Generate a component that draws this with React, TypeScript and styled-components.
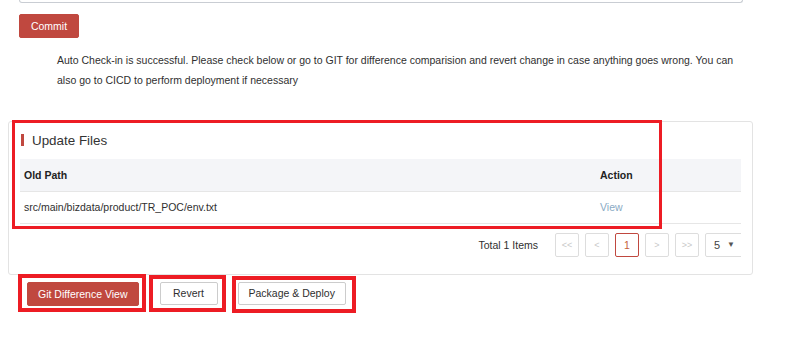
import React from "react";
import styled, { createGlobalStyle } from "styled-components";

const GlobalStyle = createGlobalStyle`
  html, body { margin: 0; padding: 0; background: #ffffff; }
  body {
    font-family: "Liberation Sans", Arial, sans-serif;
    font-size: 10.5px;
    color: #2f2f2f;
  }
  * { box-sizing: border-box; }
`;

const Page = styled.div`
  position: relative;
  width: 786px;
  height: 364px;
  overflow: hidden;
`;

const InputTail = styled.div`
  margin-left: 19px;
  width: 724px;
  height: 3px;
  border: 1px solid #c9cdd3;
  border-top: none;
  border-radius: 0 0 3px 3px;
`;

const Button = styled.button<{ $primary?: boolean }>`
  display: inline-flex;
  align-items: center;
  justify-content: center;
  height: ${(p) => (p.$primary ? "24px" : "23px")};
  min-width: 58px;
  padding: 0 10px;
  font-family: "Liberation Sans", Arial, sans-serif;
  font-size: 10.5px;
  border-radius: 2px;
  cursor: pointer;
  background: ${(p) => (p.$primary ? "#c0483f" : "#ffffff")};
  color: ${(p) => (p.$primary ? "#ffffff" : "#2f2f2f")};
  border: 1px solid ${(p) => (p.$primary ? "#c0483f" : "#cccccc")};
`;

const CommitButton = styled(Button)`
  margin: 11px 0 0 19px;
  width: 60px;
`;

const Message = styled.p`
  margin: 12px 0 0 57px;
  width: 690px;
  line-height: 20px;
`;

const Card = styled.section`
  margin: 31px 0 0 8px;
  width: 745px;
  border: 1px solid #e3e3e3;
  border-radius: 3px;
  padding: 8px 11px 17px 11px;
`;

const Title = styled.h3`
  display: flex;
  align-items: center;
  gap: 8px;
  height: 20px;
  margin: 0 0 9px 1px;
  font-size: 13.4px;
  font-weight: normal;
  color: #333333;
  &::before {
    content: "";
    width: 3px;
    height: 12px;
    background: #c0483f;
  }
`;

const Table = styled.table`
  width: 100%;
  border-collapse: collapse;
`;

const HeadCell = styled.th<{ $w?: number }>`
  height: 32px;
  padding: 0 4px;
  text-align: left;
  font-weight: bold;
  color: #222222;
  background: #f4f5f8;
  border-bottom: 1px solid #e6e6e6;
  width: ${(p) => (p.$w ? `${p.$w}px` : "auto")};
`;

const Cell = styled.td`
  height: 32px;
  padding: 0 4px;
  border-bottom: 1px solid #e6e6e6;
  color: #2f2f2f;
`;

const ViewLink = styled.a`
  color: #8aaac4;
  text-decoration: none;
`;

const Pager = styled.div`
  display: flex;
  justify-content: flex-end;
  align-items: center;
  margin-top: 9px;
  height: 24px;
  overflow: hidden;
`;

const Total = styled.span`
  margin-right: 17px;
  color: #2f2f2f;
`;

const PageBox = styled.span<{ $active?: boolean }>`
  display: inline-flex;
  align-items: center;
  justify-content: center;
  width: 24px;
  height: 24px;
  margin-right: 6px;
  border: 1px solid ${(p) => (p.$active ? "#c0483f" : "#dddddd")};
  border-radius: 2px;
  font-size: ${(p) => (p.$active ? "10.5px" : "9px")};
  color: ${(p) => (p.$active ? "#c4603a" : "#c8c8c8")};
  flex-shrink: 0;
`;

const SizeSelect = styled.span`
  display: inline-flex;
  align-items: center;
  justify-content: space-between;
  width: 50px;
  height: 24px;
  padding: 0 19px 0 8px;
  margin-right: -14px;
  border: 1px solid #dddddd;
  border-radius: 2px;
  font-size: 11px;
  color: #444444;
  flex-shrink: 0;
`;

const Caret = styled.span`
  font-size: 8px;
  color: #555555;
`;

const Actions = styled.div`
  display: flex;
  gap: 21px;
  margin: 7px 0 0 27px;
  & > :nth-child(3) {
    margin-left: -1px;
  }
`;

const Annotation = styled.div<{ $x: number; $y: number; $w: number; $h: number; $t: number }>`
  position: absolute;
  left: ${(p) => p.$x}px;
  top: ${(p) => p.$y}px;
  width: ${(p) => p.$w}px;
  height: ${(p) => p.$h}px;
  border: ${(p) => p.$t}px solid #ed1c24;
  pointer-events: none;
`;

export default function App() {
  return (
    <>
      <GlobalStyle />
      <Page>
        <InputTail />
        <CommitButton $primary>Commit</CommitButton>
        <Message>
          Auto Check-in is successful. Please check below or go to GIT for difference comparision and
          revert change in case anything goes wrong. You can also go to CICD to perform deployment if
          necessary
        </Message>
        <Card>
          <Title>Update Files</Title>
          <Table>
            <thead>
              <tr>
                <HeadCell>Old Path</HeadCell>
                <HeadCell $w={145}>Action</HeadCell>
              </tr>
            </thead>
            <tbody>
              <tr>
                <Cell>src/main/bizdata/product/TR_POC/env.txt</Cell>
                <Cell>
                  <ViewLink href="#">View</ViewLink>
                </Cell>
              </tr>
            </tbody>
          </Table>
          <Pager>
            <Total>Total 1 Items</Total>
            <PageBox>&lt;&lt;</PageBox>
            <PageBox>&lt;</PageBox>
            <PageBox $active>1</PageBox>
            <PageBox>&gt;</PageBox>
            <PageBox>&gt;&gt;</PageBox>
            <SizeSelect>
              5 <Caret>▼</Caret>
            </SizeSelect>
          </Pager>
        </Card>
        <Actions>
          <Button $primary>Git Difference View</Button>
          <Button>Revert</Button>
          <Button>Package &amp; Deploy</Button>
        </Actions>
        <Annotation $x={12} $y={120} $w={650} $h={109} $t={3} />
        <Annotation $x={18} $y={274} $w={128} $h={38} $t={4} />
        <Annotation $x={149} $y={275} $w={77} $h={37} $t={4} />
        <Annotation $x={232} $y={276} $w={124} $h={37} $t={4} />
      </Page>
    </>
  );
}
